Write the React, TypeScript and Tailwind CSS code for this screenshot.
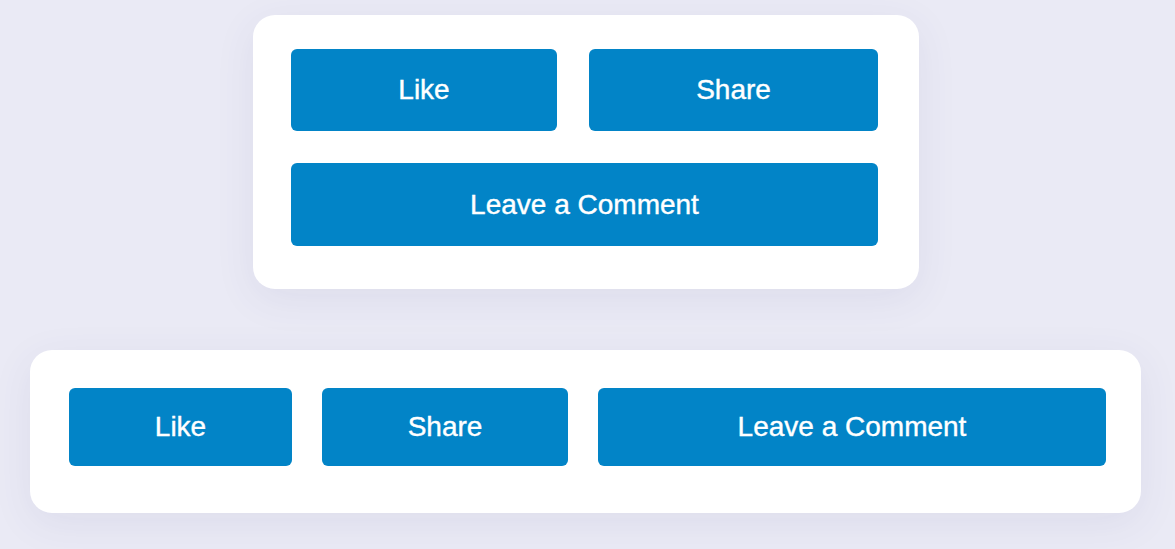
import React from "react";

const btn =
  "flex items-center justify-center rounded-[6px] bg-[#0284c7] text-white text-[28px] leading-none [-webkit-text-stroke:0.4px_white]";

export default function App() {
  return (
    <div
      className="w-[1175px] h-[549px] bg-[#eaeaf5] flex flex-col items-center pt-[15px] overflow-hidden"
      style={{ fontFamily: '"Liberation Sans", Arial, sans-serif' }}
    >
      <div className="w-[666px] h-[274px] bg-white rounded-[22px] pl-[38px] pr-[41px] pt-[34px] shadow-[0_10px_40px_rgba(70,70,130,0.08)] flex flex-col gap-[32px] mr-[3px]">
        <div className="flex gap-[32px]">
          <div className={`${btn} w-[266px] h-[82px]`}>Like</div>
          <div className={`${btn} w-[289px] h-[82px]`}>Share</div>
        </div>
        <div className={`${btn} w-[587px] h-[83px]`}>Leave a Comment</div>
      </div>
      <div className="mt-[61px] w-[1111px] h-[163px] bg-white rounded-[22px] pl-[39px] pt-[38px] shadow-[0_10px_40px_rgba(70,70,130,0.08)] flex gap-[30px] mr-[4px]">
        <div className={`${btn} w-[223px] h-[78px]`}>Like</div>
        <div className={`${btn} w-[246px] h-[78px]`}>Share</div>
        <div className={`${btn} w-[508px] h-[78px]`}>Leave a Comment</div>
      </div>
    </div>
  );
}
